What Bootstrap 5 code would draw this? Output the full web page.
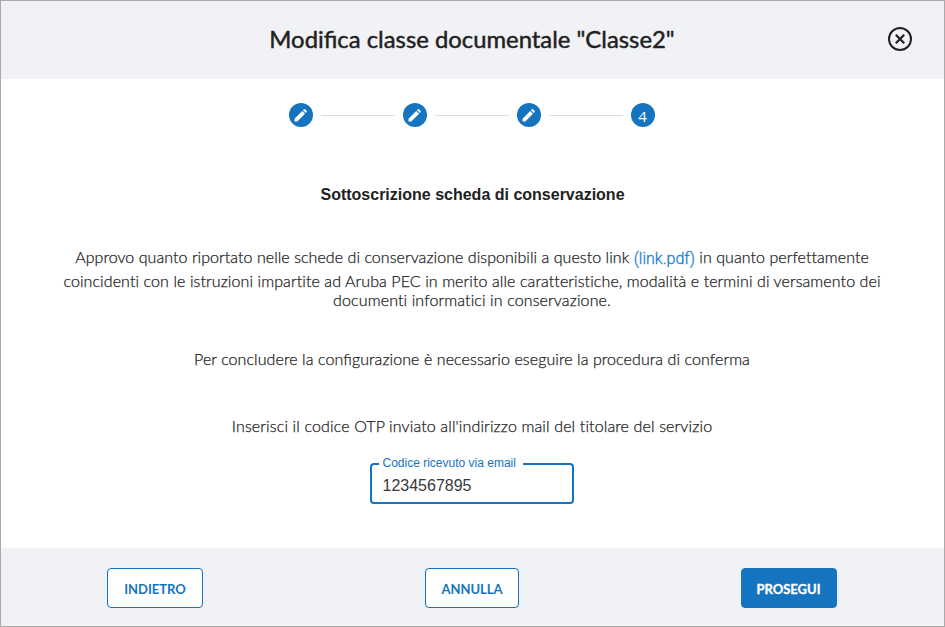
<!DOCTYPE html>
<html lang="it">
<head>
<meta charset="utf-8">
<meta name="viewport" content="width=device-width, initial-scale=1">
<title>Modifica classe documentale</title>
<link href="https://cdn.jsdelivr.net/npm/bootstrap@5.3.0/dist/css/bootstrap.min.css" rel="stylesheet">
<style>
:root { --brand: #1574bf; --ink: #212121; }
body { font-family: Lato, sans-serif; color: var(--ink); font-size: 16px; line-height: 20px; }
.dialog-frame { height: 627px; border: 1px solid #a9a9a9; background: #fff; overflow: hidden; }
.bar { background: #f1f2f6; height: 78px; }
.bar-head { padding: 0 31px 2px; }
.bar-foot { padding: 2px 107px 0 106px; }
.side { width: 25px; }
.dialog-title { font-size: 23.85px; line-height: 30px; font-weight: 400; -webkit-text-stroke: .45px var(--ink); }
.dialog-body { padding-right: 2px; }
.step-dot { width: 24px; height: 24px; background: var(--brand); }
.step-num { font-family: "Open Sans", sans-serif; font-size: 15px; line-height: 26px; }
.step-line { width: 74px; height: 1px; background: #dedede; }
.section-title { font: bold 16px/20px "Liberation Sans", sans-serif; margin: 58px 0 42px; padding-left: 2px; }
.copy { font-weight: 300; -webkit-text-stroke: .25px var(--ink); letter-spacing: .135px; margin: 0; padding-left: 1px; }
.copy .liga { letter-spacing: 0; }
.copy .row-text { display: block; line-height: 20px; letter-spacing: .12px; }
.copy .row-lead { height: 24px; letter-spacing: .055px; }
.copy .row-mid { height: 19px; letter-spacing: .095px; }
.copy-next { margin-top: 39px; letter-spacing: .08px; }
.copy-otp { margin-top: 47px; }
.doc-link { color: #1c80cf; font-family: Roboto, sans-serif; letter-spacing: 0; -webkit-text-stroke: .3px #1c80cf; position: relative; top: 1px; }
.otp { width: 204px; height: 48px; margin-top: 20px; border: 2px solid var(--brand); border-radius: 4px; padding: 5px 11px 0; font-family: "Liberation Sans", sans-serif; }
.otp legend { float: none; width: 144px; height: 15px; margin: 0 0 0 -4px; padding: 0 4px; font-size: 12px; line-height: 14px; color: var(--brand); white-space: nowrap; }
.otp input { font-size: 16px; line-height: 20px; color: #393939; outline: 0; }
.act { height: 40px; font-size: 13px; font-weight: 700; border-radius: 4px; padding: 3px 0 0; --bs-btn-color: var(--brand); --bs-btn-bg: #fff; --bs-btn-border-color: var(--brand); }
.act-main { --bs-btn-color: #fff; --bs-btn-bg: var(--brand); -webkit-text-stroke: .3px #fff; padding-right: 1px; }
.w96 { width: 96px; }
.w94 { width: 94px; }
</style>
<script src="https://cdn.jsdelivr.net/npm/bootstrap@5.3.0/dist/js/bootstrap.bundle.min.js"></script>
</head>
<body>
<svg class="d-none"><symbol id="pencil" viewBox="0 0 24 24"><path transform="translate(.4 1.300) scale(.93)" d="M5.500 18.500v-3l8.300-8.300 3 3-8.300 8.300zM14.600 6.400l1-1q.6-.6 1.200 0l1.800 1.800q.6.600 0 1.200l-1 1z"/></symbol></svg>
<main class="dialog-frame d-flex flex-column">
  <header class="bar bar-head d-flex align-items-center justify-content-between flex-shrink-0">
    <span class="side"></span>
    <h1 class="dialog-title m-0">Modifica classe documentale "Classe2"</h1>
    <button class="btn p-0 border-0 d-flex" aria-label="Chiudi"><svg width="26" height="26" viewBox="0 0 26 26" fill="none" stroke="#212121"><circle cx="13" cy="13" r="11" stroke-width="2"/><path d="M8.800 8.800l8.400 8.400M17.200 8.800l-8.400 8.400" stroke-width="2.200"/></svg></button>
  </header>
  <section class="dialog-body flex-grow-1 text-center">
    <div class="d-flex align-items-center justify-content-center gap-2 mt-4">
      <span class="step-dot rounded-circle d-flex"><svg width="24" height="24" fill="#fff"><use href="#pencil"/></svg></span>
      <span class="step-line"></span>
      <span class="step-dot rounded-circle d-flex"><svg width="24" height="24" fill="#fff"><use href="#pencil"/></svg></span>
      <span class="step-line"></span>
      <span class="step-dot rounded-circle d-flex"><svg width="24" height="24" fill="#fff"><use href="#pencil"/></svg></span>
      <span class="step-line"></span>
      <span class="step-dot step-num rounded-circle text-white">4</span>
    </div>
    <h2 class="section-title">Sottoscrizione scheda di conservazione</h2>
    <p class="copy">
      <span class="row-text row-lead">Approvo quanto riportato nelle schede di conservazione disponibili a questo link <a class="doc-link text-decoration-none" href="#">(link.pdf)</a> in quanto perfettamente</span>
      <span class="row-text row-mid">coincidenti con le istruzioni impartite ad Aruba PEC in merito alle caratteristiche, modalità e termini di versamento dei</span>
      <span class="row-text">documenti informatici in conservazione.</span>
    </p>
    <p class="copy copy-next">Per concludere la con<span class="liga">fi</span>gurazione è necessario eseguire la procedura di conferma</p>
    <p class="copy copy-otp">Inserisci il codice OTP inviato all'indirizzo mail del titolare del servizio</p>
    <fieldset class="otp mx-auto text-start"><legend>Codice ricevuto via email</legend><input class="border-0 p-0 w-100 d-block" aria-label="Codice ricevuto via email" value="1234567895"></fieldset>
  </section>
  <footer class="bar bar-foot d-flex align-items-center justify-content-between flex-shrink-0">
    <button class="btn act w96">INDIETRO</button>
    <button class="btn act w94">ANNULLA</button>
    <button class="btn act act-main w96">PROSEGUI</button>
  </footer>
</main>
</body>
</html>
